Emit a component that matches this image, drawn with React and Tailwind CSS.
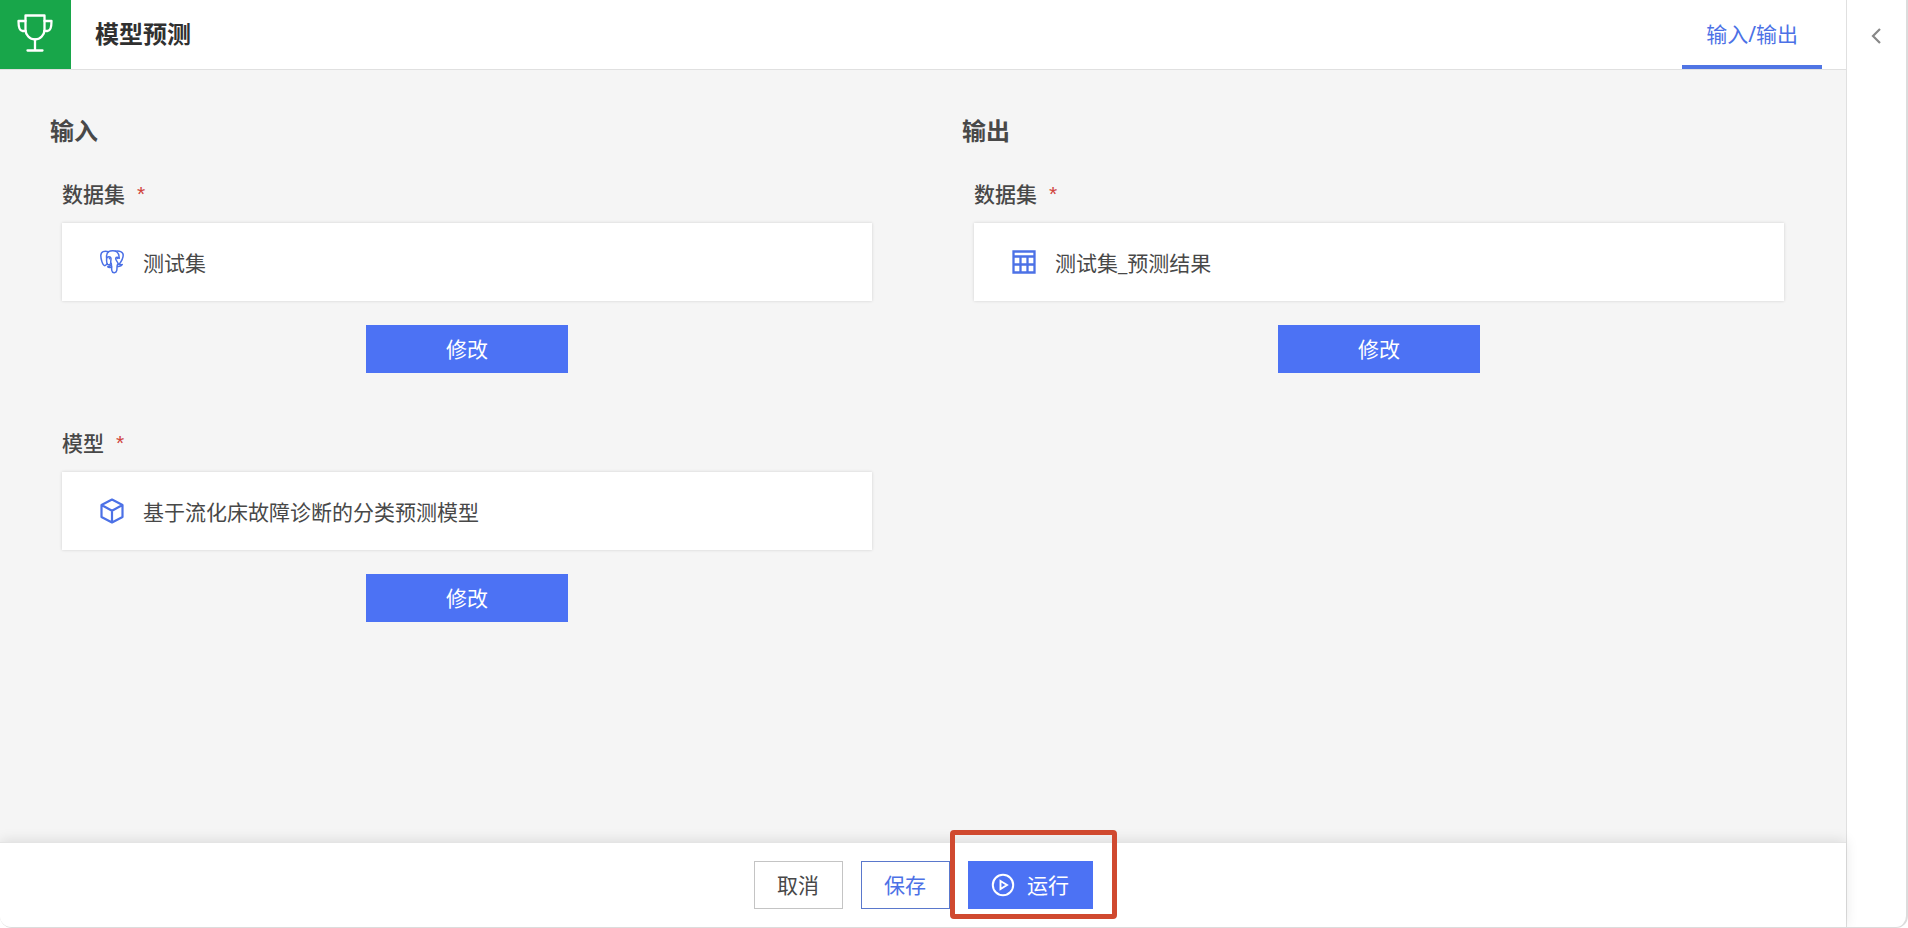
import React, { useId } from "react";

function TrophyIcon() {
  return (
    <svg width="36" height="40" viewBox="0 0 36 40" fill="none" stroke="currentColor" strokeWidth="2.3" strokeLinecap="round" strokeLinejoin="round" aria-hidden="true">
      <path d="M8.500 2.500h19v14C27.500 22 23.300 26.500 18 26.500S8.500 22 8.500 16.500z" />
      <path d="M8.500 8H1.500c0 5.500 1.200 10 4 10h3" />
      <path d="M27.500 8h7c0 5.500-1.200 10-4 10h-3" />
      <path d="M18 26.500v10.500M10.500 37.500h15" />
    </svg>
  );
}

function ElephantIcon() {
  return (
    <svg width="24" height="24" viewBox="0 0 24 24" fill="none" stroke="currentColor" strokeWidth="1.5" strokeLinecap="round" strokeLinejoin="round" aria-hidden="true">
      <path d="M8.500 1.700C4.500.5.800 1.500.8 5.800c0 3 1.800 9.900 4 9.900 1 0 1.600-1 2.400-2.100" />
      <path d="M8.600 1.700C6.800 3.200 6.300 5.500 6.600 8c.2 2-.6 4.800 1 6.300 1.200 1 2.900.4 3.200-1.100" />
      <path d="M8.600 1.700C10.500.500 15 .300 17 2c1.500 1.400 2.200 4 2.100 6.200" />
      <path d="M15.500 1.300c3.500-.9 7.700.4 7.700 3.800 0 3.200-2 6.600-3.900 9.100" />
      <path d="M7 7.600c1-1 3.400-1.100 3.900.3.500 1.700-.5 3.300-.1 5.300" />
      <path d="M19.100 8.200c-1.100-1.100-3-1.200-3.400.1-.3 1.900 2.300 3.800 2.500 5.700" />
      <path d="M11.200 13.500c.6 2.200.2 4.600.6 7 .3 2.700 4.300 3 4.900.2.500-2.200.1-4 .6-5.700.3-1 .9-1 .9-1 .1 1 3.200.9 4.100.5-.7 1.500-3.200 2.300-4.900 1.800" />
      <path d="M11.300 15.500c-1.100-.2-1.700 1.200-3.600 1.200.9 1.100 2.900 1.200 4 .3" />
      <path d="M9.500 8.100v.6M17.300 8.100v.5" />
    </svg>
  );
}

function TableIcon() {
  return (
    <svg width="24" height="24" viewBox="0 0 24 24" fill="none" stroke="currentColor" strokeWidth="2.3" aria-hidden="true">
      <path d="M1.500 1.500h21v21h-21zM1.500 6.500h21M1.500 14.500h21M8.500 6.500v16M15.500 6.500v16" />
    </svg>
  );
}

function CubeIcon() {
  return (
    <svg width="24" height="26" viewBox="0 0 24 26" fill="none" stroke="currentColor" strokeWidth="2.2" strokeLinejoin="round" aria-hidden="true">
      <path d="M12 1.500l10.500 5.500v12L12 24.500 1.500 19V7zM1.500 7L12 12.700 22.500 7M12 12.700v11.800" />
    </svg>
  );
}

function PlayIcon() {
  return (
    <svg width="24" height="24" viewBox="0 0 24 24" fill="none" stroke="currentColor" strokeWidth="2" aria-hidden="true">
      <circle cx="12" cy="12" r="10.200" />
      <path d="M9.500 8l6.500 4-6.500 4z" strokeWidth="1.900" />
    </svg>
  );
}

function Field({ label, icon, value }) {
  const id = useId();
  return (
    <div role="group" aria-labelledby={id} className="flex flex-col px-3">
      <h3 id={id} className="mb-3.5 flex gap-3 text-[21px] leading-[30px] font-medium text-[#484848]">
        {label}
        <span className="font-['Liberation_Sans',sans-serif] font-normal text-[#d0433c]">*</span>
      </h3>
      <div className="mb-6 flex items-center gap-[19px] bg-white py-[23px] pr-6 pl-[38px] leading-[30px] shadow-[0_0_3px_rgba(0,0,0,0.15)]">
        <span className="flex w-6 shrink-0 justify-center text-[#4c71e6]">{icon}</span>
        <span className="min-w-0 pt-0.5">{value}</span>
      </div>
      <button type="button" className="h-12 w-[202px] self-center bg-[#4c72f4] pt-0.5 text-white">
        修改
      </button>
    </div>
  );
}

export default function App() {
  return (
    <div className="flex min-h-screen overflow-hidden rounded-b-xl border-r-2 border-b border-[#dcdcdc] bg-white font-['Noto_Sans','Noto_Sans_CJK_SC',sans-serif] text-[21px] text-[#484848]">
      <div className="flex min-w-0 flex-1 flex-col">
        <header className="flex h-[70px] border-b border-[#e0e0e0]">
          <div className="flex w-[71px] items-center justify-center bg-[#18a64a] pr-0.5 pb-1 text-white">
            <TrophyIcon />
          </div>
          <h1 className="ml-6 self-center pb-0.5 text-2xl font-bold text-[#303030]">模型预测</h1>
          <nav className="mr-6 ml-auto flex">
            <a href="#io" aria-current="page" className="flex items-center border-b-4 border-[#5075e4] px-6 pt-1 text-[#4c71e6]">
              输入/输出
            </a>
          </nav>
        </header>

        <main className="grid flex-1 grid-cols-2 content-start gap-x-0.5 bg-[#f5f5f5] px-3 pt-[45px]">
          <section className="px-[38px]">
            <h2 className="mb-8 text-2xl font-bold">输入</h2>
            <div className="flex flex-col gap-[55px]">
              <Field label="数据集" icon={<ElephantIcon />} value="测试集" />
              <Field label="模型" icon={<CubeIcon />} value="基于流化床故障诊断的分类预测模型" />
            </div>
          </section>
          <section className="px-[38px]">
            <h2 className="mb-8 text-2xl font-bold">输出</h2>
            <Field label="数据集" icon={<TableIcon />} value="测试集_预测结果" />
          </section>
        </main>

        <footer className="relative flex justify-center gap-[18px] border-t border-[#e4e4e4] bg-white py-[18px] shadow-[0_-2px_12px_rgba(0,0,0,0.1)]">
          <button type="button" className="h-12 w-[89px] border border-[#c4c4c4] pt-0.5">
            取消
          </button>
          <button type="button" className="h-12 w-[89px] border border-[#5a78cc] pt-0.5 text-[#4c71e6]">
            保存
          </button>
          <div className="relative">
            <button type="button" className="flex h-12 w-[125px] items-center justify-center gap-3 bg-[#4c72f4] text-white">
              <PlayIcon />
              <span className="pt-0.5">运行</span>
            </button>
            <div className="pointer-events-none absolute -top-[31px] -right-6 -bottom-[10px] -left-[18px] rounded-sm border-5 border-[#d0492f]" />
          </div>
        </footer>
      </div>

      <aside className="flex w-[60px] shrink-0 flex-col items-center border-l border-[#e0e0e0] pt-6 pr-0.5">
        <button type="button" aria-label="展开侧栏" className="flex h-6 w-6 items-center justify-center text-[#888888]">
          <svg width="12" height="18" viewBox="0 0 12 18" fill="none" stroke="currentColor" strokeWidth="2.200" aria-hidden="true">
            <path d="M10 2L3 9l7 7" />
          </svg>
        </button>
      </aside>
    </div>
  );
}
